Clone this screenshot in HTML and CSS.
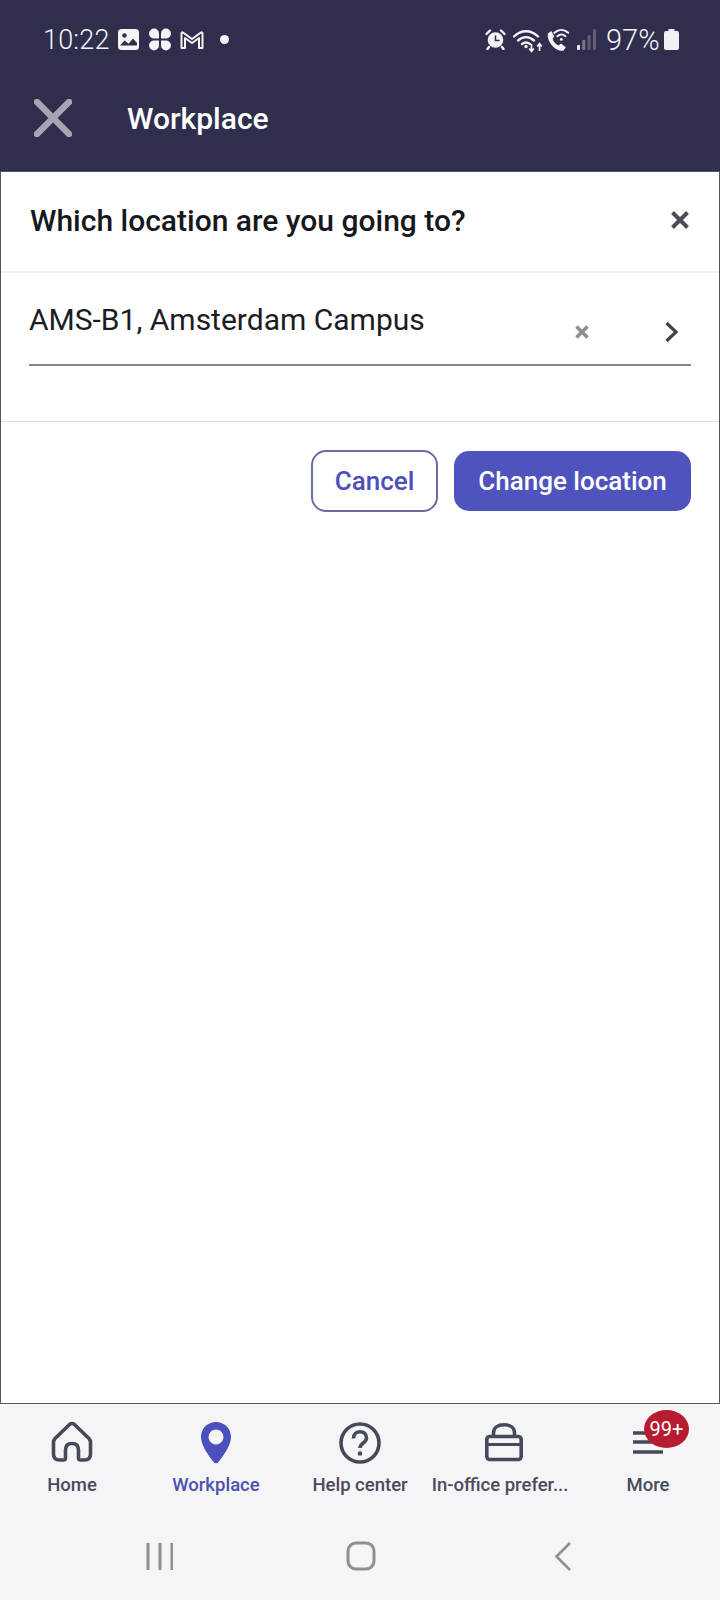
FILE: index.html
```html
<!DOCTYPE html>
<html lang="en">
<head>
<meta charset="utf-8">
<title>Workplace</title>
<link rel="stylesheet" href="styles.css">
</head>
<body>
<div class="app">
  <header class="top">
    <div class="status">
      <div class="status-left">
        <span class="time">10:22</span>
        <svg class="ic-image" width="21" height="21" viewBox="0 0 21 21"><rect x="0" y="0" width="21" height="21" rx="3.500" fill="#f4f4f6"/><path d="M2 16.500l4.500-5 4 3.200 4.500-5.200 4 4.500v2.500z" fill="#2f2e4c"/><circle cx="6.500" cy="6.500" r="2.200" fill="#2f2e4c"/></svg>
        <svg class="ic-clover" width="24" height="23" viewBox="0 0 24 23"><g fill="#f4f4f6"><path d="M11 10.500H5.500a5 5 0 1 1 5.500-5.200z"/><path d="M13 10.500h5.500a5 5 0 1 0-5.500-5.200z"/><path d="M11 12.500H5.500a5 5 0 1 0 5.500 5.200z"/><path d="M13 12.500h5.500a5 5 0 1 1-5.500 5.200z"/></g></svg>
        <svg class="ic-m" width="24" height="20" viewBox="0 0 24 20"><path d="M1.500 18V3.500q0-1.500 1.500-1L12 9l9-6.500q1.500-.500 1.500 1V18h-3.500V8l-7 5-7-5v10z" fill="none" stroke="#f4f4f6" stroke-width="2" stroke-linejoin="round"/></svg>
        <span class="dot"></span>
      </div>
      <div class="status-right">
        <svg class="ic-alarm" width="21" height="21" viewBox="0 0 21 21"><circle cx="10.500" cy="11" r="7.800" fill="#f4f4f6"/><path d="M10.500 6.500V11.500H14.500" fill="none" stroke="#2f2e4c" stroke-width="1.600"/><path d="M1.500 5L5 1.500M19.500 5L16 1.500M4 18l-1.500 2M17 18l1.500 2" stroke="#f4f4f6" stroke-width="2.400" stroke-linecap="round"/></svg>
        <svg class="ic-wifi" width="31" height="24" viewBox="0 0 31 24"><g fill="none" stroke="#f4f4f6" stroke-width="2.400" stroke-linecap="round"><path d="M1 7.500C8 .5 18 .5 25 7.500"/><path d="M5 11.500C10 7 16 7 21 11.500"/><path d="M9 15C11.500 13 14.500 13 17 15"/></g><circle cx="13" cy="17.500" r="1.700" fill="#f4f4f6"/><path d="M18.500 15v7m-2.300-2.500l2.300 2.800 2.300-2.800M26.500 22v-7m-2.300 2.500l2.300-2.800 2.300 2.800" fill="none" stroke="#f4f4f6" stroke-width="1.700"/></svg>
        <svg class="ic-call" width="24" height="24" viewBox="2 0 19 20"><path d="M3 4.500l3-2 2.500 4.500-1.500 2c.7 2.500 2.500 4.500 5 5.500l2-1.500 4 3-2 3c-7 .5-14-8-13-14.500z" fill="#f4f4f6"/><g fill="none" stroke="#f4f4f6" stroke-width="1.700" stroke-linecap="round"><path d="M8.500 4C12 .8 16.500.8 20 4"/><path d="M11 6.800c2-1.700 4.700-1.700 6.700 0"/></g><circle cx="14.300" cy="9.500" r="1.200" fill="#f4f4f6"/></svg>
        <svg class="ic-signal" width="19" height="21" viewBox="0 0 19 21"><rect x="0" y="16" width="3" height="5" rx="1" fill="#e8e8ee"/><rect x="5.300" y="11" width="3" height="10" rx="1" fill="#77768a"/><rect x="10.600" y="6" width="3" height="15" rx="1" fill="#5f5e75"/><rect x="16" y="0" width="3" height="21" rx="1" fill="#5f5e75"/></svg>
        <span class="pct">97%</span>
        <svg class="ic-batt" width="15" height="21" viewBox="0 0 15 21"><path d="M4.500 0h6v2h2.500a2 2 0 0 1 2 2v15a2 2 0 0 1-2 2H2a2 2 0 0 1-2-2V4a2 2 0 0 1 2-2h2.500z" fill="#f1f1f5"/></svg>
      </div>
    </div>
    <div class="appbar">
      <svg class="appbar-x" width="38" height="38" viewBox="0 0 38 38"><path d="M3 3L35 35M35 3L3 35" stroke="#a6a5b3" stroke-width="6.500" stroke-linecap="round"/></svg>
      <span class="appbar-title">Workplace</span>
    </div>
  </header>

  <main class="sheet">
    <div class="sheet-head">
      <h1 class="sheet-title">Which location are you going to?</h1>
      <svg class="close" width="22" height="22" viewBox="0 0 22 22"><path d="M3.500 3.500L18.500 18.500M18.500 3.500L3.500 18.500" stroke="#4a4d57" stroke-width="4"/></svg>
    </div>
    <div class="sheet-body">
      <div class="field">
        <span class="field-value">AMS-B1, Amsterdam Campus</span>
        <svg class="clear" width="16" height="16" viewBox="0 0 16 16"><path d="M2.500 2.500L13.500 13.500M13.500 2.500L2.500 13.500" stroke="#8c8e92" stroke-width="3.600"/></svg>
        <svg class="chev" width="15" height="22" viewBox="0 0 15 22"><path d="M2.500 2L12 11L2.500 20" fill="none" stroke="#3f434f" stroke-width="3.200"/></svg>
      </div>
    </div>
    <div class="sheet-actions">
      <button class="btn btn-ghost">Cancel</button>
      <button class="btn btn-primary">Change location</button>
    </div>
  </main>

  <nav class="tabs">
    <div class="tab">
      <svg width="40" height="42" viewBox="0 0 40 42"><path d="M3 18.500L17.500 4.500q2.500-2 5 0L37 18.500q1.500 1.500 1.500 4V34q0 6-6 6H28.500q-2 0-2-2V30q0-6.500-6.500-6.500T13.500 30v8q0 2-2 2H7.500q-6 0-6-6V22.500q0-2.500 1.500-4z" fill="none" stroke="#454a5b" stroke-width="3.600" stroke-linejoin="round"/></svg>
      <span class="tab-label">Home</span>
    </div>
    <div class="tab tab-active">
      <svg width="40" height="42" viewBox="0 -2 40 42"><path fill-rule="evenodd" d="M20 0C28.500 0 35 6.500 35 15c0 8-7 18-12.500 25q-2.500 2.500-5 0C12 33 5 23 5 15 5 6.500 11.500 0 20 0zm0 7.500a7.500 7.500 0 1 0 0 15 7.500 7.500 0 0 0 0-15z" fill="#4c50bd"/></svg>
      <span class="tab-label">Workplace</span>
    </div>
    <div class="tab">
      <svg width="42" height="42" viewBox="0 -2 42 42"><circle cx="21" cy="21" r="19" fill="none" stroke="#454a5b" stroke-width="3.600"/><path d="M14.500 16.500c0-9 13-9 13-.5 0 5-6.500 5-6.500 10" fill="none" stroke="#454a5b" stroke-width="3.600"/><circle cx="21" cy="31.500" r="2.300" fill="#454a5b"/></svg>
      <span class="tab-label">Help center</span>
    </div>
    <div class="tab">
      <svg width="40" height="42" viewBox="0 0 40 42"><path d="M9.500 16V13C9.500 7.500 14 4.800 20 4.800S30.500 7.500 30.500 13V16" fill="none" stroke="#454a5b" stroke-width="3.600"/><rect x="2.800" y="16.500" width="34.400" height="23" rx="3" fill="none" stroke="#454a5b" stroke-width="3.600"/><path d="M2.800 24.500H37.200" stroke="#454a5b" stroke-width="3.200"/></svg>
      <span class="tab-label tab-label-trunc">In-office prefer...</span>
    </div>
    <div class="tab">
      <div class="more-icon">
        <svg width="40" height="42" viewBox="0 0 40 42"><path d="M5 13H35M5 22H35M5 32H35" stroke="#454a5b" stroke-width="3.400"/></svg>
        <span class="badge">99+</span>
      </div>
      <span class="tab-label">More</span>
    </div>
  </nav>

  <div class="sysnav">
    <svg width="27" height="29" viewBox="0 0 27 29"><path d="M2 1V28M14 1V28M26 1V28" stroke="#8e8f92" stroke-width="3"/></svg>
    <svg class="sys-home" width="30" height="30" viewBox="0 0 30 30"><rect x="2" y="2" width="26" height="26" rx="8" fill="none" stroke="#8e8f92" stroke-width="3"/></svg>
    <svg width="18" height="31" viewBox="0 0 18 31"><path d="M16 2L2.500 15.500L16 29" fill="none" stroke="#8e8f92" stroke-width="2.600"/></svg>
  </div>
</div>
</body>
</html>
```
FILE: styles.css
```css
* { box-sizing: border-box; margin: 0; padding: 0; }
html, body { width: 720px; height: 1600px; overflow: hidden; }
body { font-family: Roboto, "Liberation Sans", sans-serif; background: #f5f5f8; }
svg { flex: none; }
.app { display: flex; flex-direction: column; height: 1600px; }

.top { height: 171px; background: #2f2e4c; color: #fff; padding-top: 29px; }
.status { display: flex; justify-content: space-between; align-items: center; height: 21px; padding: 0 41px 0 43px; }
.status-left, .status-right { display: flex; align-items: center; }
.time { font-size: 27px; font-weight: 300; color: #f4f4f6; margin-right: 10px; width: 65px; letter-spacing: .2px; }
.ic-clover { margin-left: 9px; }
.ic-m { margin-left: 8px; }
.dot { width: 9px; height: 9px; border-radius: 50%; background: #f4f4f6; margin-left: 16px; }
.ic-wifi { margin-left: 7px; margin-top: 3px; }
.ic-call { margin-left: 2px; }
.ic-signal { margin-left: 7px; }
.pct { font-size: 29px; font-weight: 300; color: #f4f4f6; margin-left: 10px; width: 56px; white-space: nowrap; }
.ic-batt { margin-left: 2px; }

.appbar { display: flex; align-items: center; height: 38px; margin-top: 49px; padding-left: 34px; }
.appbar-title { font-size: 30px; font-weight: 500; margin-left: 55px; }

.sheet { flex: 1; display: flex; flex-direction: column; background: #fff; border: 1px solid #55565f; }
.sheet-head { display: flex; justify-content: space-between; align-items: center; flex: none; height: 101px; padding: 0 28px 3px 29px; border-bottom: 2px solid #efeff0; }
.sheet-title { font-size: 30px; font-weight: 500; color: #16181d; }
.sheet-body { flex: none; height: 149px; padding: 0 28px; border-bottom: 1px solid #dedfe2; }
.field { display: flex; align-items: center; height: 93px; padding-top: 26px; border-bottom: 2px solid #85888c; }
.field-value { flex: 1; font-size: 30px; font-weight: 400; color: #1b1d22; padding-bottom: 25px; }
.clear { margin-right: 74px; }
.chev { margin-right: 12px; }
.sheet-actions { display: flex; justify-content: flex-end; align-items: center; gap: 16px; padding: 28px 28px 0 0; }
.btn { font-family: Roboto, "Liberation Sans", sans-serif; font-size: 26px; font-weight: 500; border-radius: 15px; }
.btn-ghost { width: 127px; height: 62px; background: #fff; color: #4c50b8; border: 2px solid #6a6ca6; }
.btn-primary { width: 237px; height: 60px; background: #4f53bd; color: #fff; border: 0; }

.tabs { display: grid; grid-template-columns: repeat(5, 144px); height: 123px; padding-top: 16px; }
.tab { display: flex; flex-direction: column; align-items: center; gap: 12px; color: #474b5c; }
.tab svg { overflow: visible; }
.tab-active { color: #4c50b0; }
.tab-label { font-size: 18.500px; font-weight: 500; white-space: nowrap; }
.tab-label-trunc { margin-right: 8px; }
.more-icon { position: relative; width: 40px; height: 42px; }
.badge { position: absolute; top: -10px; left: 16px; width: 45px; height: 38px; border-radius: 50%; background: #b71c31; color: #fff; font-size: 20px; line-height: 38px; text-align: center; }

.sysnav { display: flex; justify-content: space-between; align-items: center; height: 30px; margin: 14px 0 29px; padding: 0 148px 0 146px; }
.sys-home { margin-right: 6px; }
```
